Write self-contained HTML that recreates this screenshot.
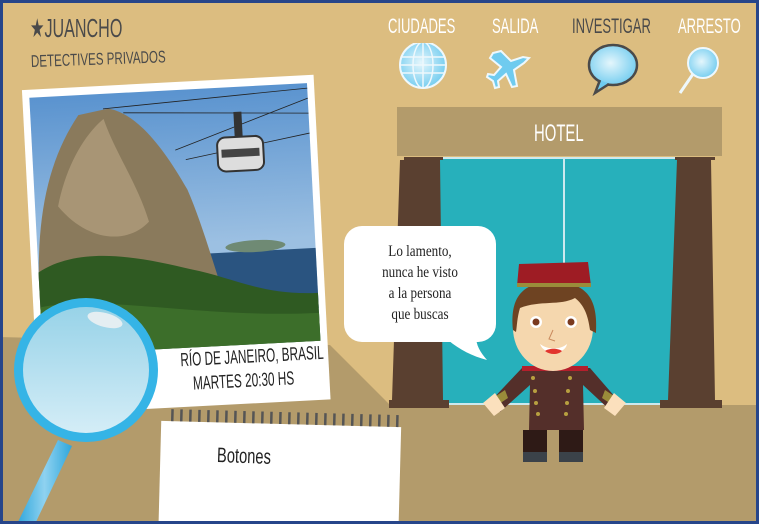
<!DOCTYPE html>
<html><head><meta charset="utf-8"><style>
*{margin:0;padding:0;box-sizing:border-box}
body{width:759px;height:524px;overflow:hidden;background:#26458a;font-family:"Liberation Sans",sans-serif}
#s{position:absolute;left:3px;top:3px;width:753px;height:518px;background:#dcbd80;overflow:hidden}
.hand{font-family:"Liberation Sans",sans-serif;white-space:nowrap}
.abs{position:absolute}
</style></head><body>
<div id="s">
<svg class="abs" style="left:0;top:0" width="753" height="518" viewBox="3 3 753 518">
 <polygon points="0,337 330,345 390,405 760,405 760,524 0,524" fill="#b39b6b"/>
 <rect x="397" y="107" width="325" height="49" fill="#b39b6b"/>
 <rect x="438" y="157" width="244" height="248" fill="#27b0bb"/>
 <rect x="438" y="157" width="244" height="2" fill="#cde9ee"/>
 <rect x="563" y="157" width="2" height="248" fill="#cde9ee"/>
 <rect x="438" y="403" width="244" height="2" fill="#cde9ee"/>
 <polygon points="404,157 443,157 443,160 440,160 443,400 392,400 400,160 404,160" fill="#5a4030"/>
 <rect x="389" y="400" width="60" height="8" fill="#5a4030"/>
 <polygon points="675,157 715,157 715,160 711,160 715,400 668,400 677,160 675,160" fill="#5a4030"/>
 <rect x="660" y="400" width="62" height="8" fill="#5a4030"/>
 <rect x="344" y="226" width="152" height="116" rx="18" fill="#fff"/>
 <path d="M448,340 C460,350 472,356 487,360 C480,352 476,345 476,336 Z" fill="#fff"/>
 <polygon points="487,405 522,368 590,368 622,405 612,412 583,385 584,430 529,430 530,385 500,412" fill="#542f2a"/>
 <polygon points="496,396 505,390 508,398 499,404" fill="#9a8c3a"/>
 <polygon points="614,396 605,390 602,398 611,404" fill="#9a8c3a"/>
 <polygon points="483,403 495,393 505,408 494,416" fill="#fbe0bd"/>
 <polygon points="626,403 614,393 604,408 615,416" fill="#fbe0bd"/>
 <rect x="522" y="366" width="66" height="5" fill="#b51f2c"/>
 <rect x="523" y="430" width="24" height="22" fill="#2e1a16"/>
 <rect x="559" y="430" width="24" height="22" fill="#2e1a16"/>
 <rect x="523" y="452" width="24" height="10" fill="#3b4249"/>
 <rect x="559" y="452" width="24" height="10" fill="#3b4249"/>
 <g fill="#b8a040"><circle cx="533" cy="378" r="2"/><circle cx="570" cy="378" r="2"/><circle cx="535" cy="391" r="2"/><circle cx="568" cy="391" r="2"/><circle cx="536" cy="403" r="2"/><circle cx="567" cy="403" r="2"/><circle cx="538" cy="414" r="2"/><circle cx="566" cy="414" r="2"/></g>
 <ellipse cx="553" cy="328" rx="40" ry="43" fill="#f5d7ae"/>
 <path d="M513,330 C510,300 520,282 553,282 C588,282 598,300 596,333 L590,330 C588,315 584,305 575,298 C560,306 540,300 520,308 C517,318 517,326 516,332 Z" fill="#6e4322"/>
 <polygon points="519,264 588,262 591,286 517,286" fill="#9e1c24"/>
 <rect x="517" y="283" width="74" height="4" fill="#9a8c3a"/>
 <circle cx="536" cy="322" r="6" fill="#fff"/><circle cx="536" cy="322" r="3.5" fill="#7a3a1f"/>
 <circle cx="571" cy="322" r="6" fill="#fff"/><circle cx="571" cy="322" r="3.5" fill="#7a3a1f"/>
 <path d="M553,330 L549,339 L555,341" stroke="#c98a5e" fill="none" stroke-width="1"/>
 <path d="M540,344 C548,350 560,350 567,344 C565,355 544,356 540,344 Z" fill="#fff"/>
 <path d="M545,351 C550,355 558,355 562,351 C558,348 549,348 545,351 Z" fill="#e2352e"/>
 <g transform="rotate(1.5 280 470)">
  <rect x="160" y="424" width="240" height="110" fill="#fff"/>
  <g stroke="#555" stroke-width="2.5">
   <path d="M171,412v12 M180,412v12 M189,412v12 M198,412v12 M207,412v12 M216,412v12 M225,412v12 M234,412v12 M243,412v12 M252,412v12 M261,412v12 M270,412v12 M279,412v12 M288,412v12 M297,412v12 M306,412v12 M315,412v12 M324,412v12 M333,412v12 M342,412v12 M351,412v12 M360,412v12 M369,412v12 M378,412v12 M387,412v12 M396,412v12"/>
  </g>
 </g>
 <g transform="rotate(-3 180 240)">
  <rect x="30" y="82" width="292" height="325" fill="#fff"/>
  <defs><linearGradient id="sky" x1="0" y1="0" x2="0" y2="1"><stop offset="0" stop-color="#5a93cf"/><stop offset="0.6" stop-color="#9cc0e2"/></linearGradient></defs>
  <rect x="37" y="90" width="278" height="258" fill="url(#sky)"/>
  <rect x="200" y="255" width="115" height="60" fill="#2a5480"/>
  <ellipse cx="255" cy="250" rx="30" ry="6" fill="#6f8a74"/>
  <path d="M37,270 C40,200 55,150 85,110 L115,105 C140,110 165,140 190,190 C205,230 215,280 225,310 L37,330 Z" fill="#8a7a5c"/>
  <path d="M60,200 C70,160 90,130 110,115 C120,150 140,180 150,220 C130,240 90,240 60,200 Z" fill="#a89575"/>
  <path d="M37,265 C80,240 140,255 190,270 C230,280 260,300 315,300 L315,348 L37,348 Z" fill="#2f5a22"/>
  <path d="M37,300 C100,290 200,320 315,320 L315,348 L37,348Z" fill="#3c6e2a"/>
  <g stroke="#222" stroke-width="0.8" fill="none"><path d="M110,105 L315,95"/><path d="M130,110 L315,120"/><path d="M180,150 L315,105"/><path d="M190,160 L315,140"/></g>
  <rect x="222" y="140" width="46" height="34" rx="8" fill="#ddd" stroke="#333" stroke-width="2"/>
  <rect x="226" y="152" width="38" height="8" fill="#444"/>
  <rect x="240" y="115" width="8" height="25" fill="#333"/>
 </g>
 <defs><linearGradient id="gl" x1="0" y1="0" x2="0" y2="1"><stop offset="0" stop-color="#a9d8e8"/><stop offset="1" stop-color="#f0f7fa"/></linearGradient>
 <linearGradient id="hd" x1="0" y1="0" x2="1" y2="0"><stop offset="0" stop-color="#2ea6dc"/><stop offset="0.5" stop-color="#8fd2f0"/><stop offset="1" stop-color="#2ea6dc"/></linearGradient></defs>
 <polygon points="58,440 72,446 35,524 17,524" fill="url(#hd)"/>
 <circle cx="86" cy="370" r="72" fill="#35b4e6"/>
 <circle cx="86" cy="370" r="63" fill="url(#gl)" opacity="0.85"/>
 <ellipse cx="105" cy="320" rx="18" ry="7" fill="#e4eef2" transform="rotate(15 105 320)"/>
</svg>
<div class="abs hand" style="left:27px;top:10px;font-size:26px;color:#4a4a4a;transform:scaleX(0.62);transform-origin:left">★JUANCHO</div>
<div class="abs hand" style="left:28px;top:49px;font-size:17px;color:#4a4a4a;transform:rotate(-2deg) scaleX(0.68);transform-origin:left">DETECTIVES PRIVADOS</div>
<div class="abs hand" style="left:385px;top:12px;font-size:21px;color:#fff;transform:scaleX(0.62);transform-origin:left">CIUDADES</div>
<div class="abs hand" style="left:489px;top:12px;font-size:21px;color:#fff;transform:scaleX(0.62);transform-origin:left">SALIDA</div>
<div class="abs hand" style="left:569px;top:12px;font-size:21px;color:#4a4a4a;transform:scaleX(0.62);transform-origin:left">INVESTIGAR</div>
<div class="abs hand" style="left:675px;top:12px;font-size:21px;color:#fff;transform:scaleX(0.62);transform-origin:left">ARRESTO</div>
<svg class="abs" style="left:380px;top:40px" width="370" height="60">
 <defs><radialGradient id="ic" cx="0.45" cy="0.45" r="0.6"><stop offset="0" stop-color="#e4f6fc"/><stop offset="1" stop-color="#6fcbef"/></radialGradient></defs>
 <circle cx="40" cy="22" r="23" fill="url(#ic)" stroke="#eef8fc" stroke-width="2"/>
 <g stroke="#eef8fc" stroke-width="1.5" fill="none"><ellipse cx="40" cy="22" rx="10" ry="23"/><path d="M40,-1v46 M18,14h44 M17,22h46 M18,30h44"/></g>
 <path d="M118,8 L128,18 L140,14 L146,15 L141,20 L131,27 L134,43 L129,44 L123,31 L115,38 L116,44 L112,45 L110,38 L104,34 L105,31 L111,32 L118,24 L107,15 L110,10 Z" fill="#6fcbef" stroke="#eef8fc" stroke-width="2"/>
 <ellipse cx="230" cy="22" rx="24" ry="20" fill="url(#ic)" stroke="#4a4a4a" stroke-width="2.5"/>
 <path d="M217,37 L212,50 L226,41" fill="#6fcbef" stroke="#4a4a4a" stroke-width="2.5"/>
 <circle cx="320" cy="20" r="15" fill="url(#ic)" stroke="#eef8fc" stroke-width="2"/>
 <path d="M310,31 L297,50" stroke="#eef8fc" stroke-width="3"/>
</svg>
<div class="abs hand" style="left:531px;top:117px;font-size:24px;color:#fff;transform:scaleX(0.62);transform-origin:left">HOTEL</div>
<div class="abs" style="left:341px;top:238px;width:152px;text-align:center;font-family:'Liberation Serif',serif;font-size:16px;line-height:21px;color:#222;transform:scaleX(0.82)">Lo lamento,<br>nunca he visto<br>a la persona<br>que buscas</div>
<div class="abs hand" style="left:140px;top:343px;width:200px;text-align:center;font-size:19px;line-height:24px;color:#222;transform:rotate(-3deg) scaleX(0.62)">RÍO DE JANEIRO, BRASIL<br>MARTES 20:30 HS</div>
<div class="abs hand" style="left:214px;top:441px;font-size:21px;color:#222;transform:rotate(2deg) scaleX(0.7);transform-origin:left">Botones</div>
</div>
</body></html>
